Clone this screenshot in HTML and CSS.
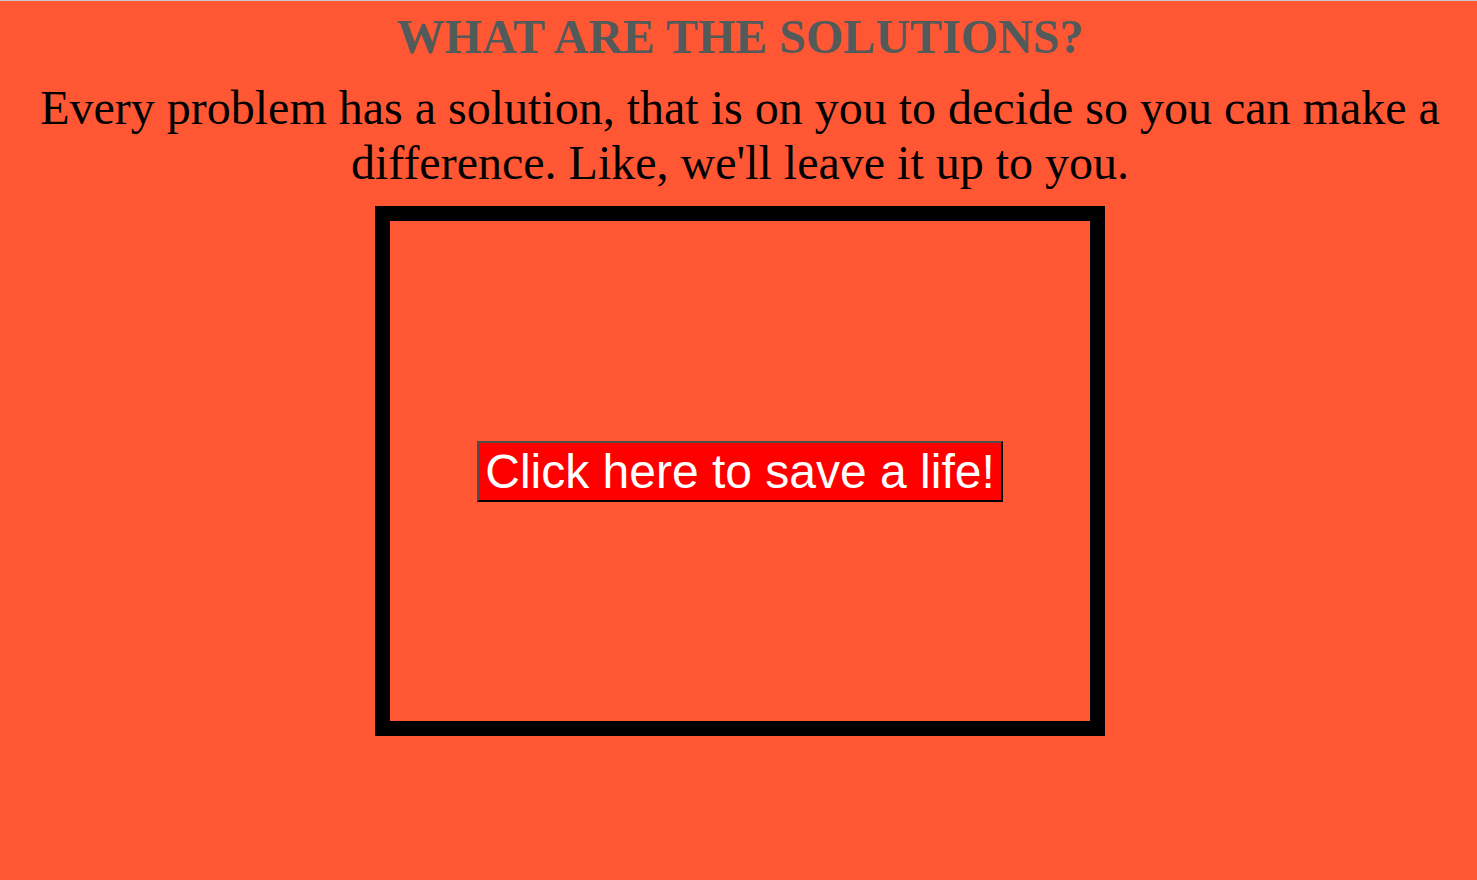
FILE: index.html
```html
<!DOCTYPE html>
<html lang="en">
<head>
<meta charset="utf-8">
<title>What are the solutions?</title>
<link rel="stylesheet" href="styles.css">
</head>
<body>
<main class="page">
  <h1 class="title">WHAT ARE THE SOLUTIONS?</h1>
  <p class="intro">Every problem has a solution, that is on you to decide so you can make a difference. Like, we'll leave it up to you.</p>
  <div class="frame">
    <button class="save-btn" type="button">Click here to save a life!</button>
  </div>
</main>
</body>
</html>
```
FILE: styles.css
```css
html, body {
  margin: 0;
  padding: 0;
  background: #ff5733;
}
body {
  border-top: 1px solid #c9c9c9;
  min-height: 879px;
}
.page {
  display: flex;
  flex-direction: column;
  align-items: center;
  padding-left: 3px;
  font-family: "Liberation Serif", "Times New Roman", serif;
}
.title {
  margin: 8px 0 16px;
  font-size: 48px;
  font-weight: bold;
  line-height: normal;
  color: #525a5a;
  text-align: center;
}
.intro {
  margin: 0 0 16px;
  padding: 0 30px;
  font-size: 48px;
  line-height: normal;
  color: #000;
  text-align: center;
}
.frame {
  width: 700px;
  height: 500px;
  border: 15px solid #000;
  display: flex;
  align-items: center;
  justify-content: center;
}
.save-btn {
  font-family: "Liberation Sans", Arial, sans-serif;
  font-size: 48px;
  line-height: normal;
  color: #fff;
  background: #ff0000;
  padding: 1px 6px;
  border-style: solid;
  border-width: 2px;
  border-color: #4d4d4d #000 #000 #4d4d4d;
  cursor: pointer;
}
```
